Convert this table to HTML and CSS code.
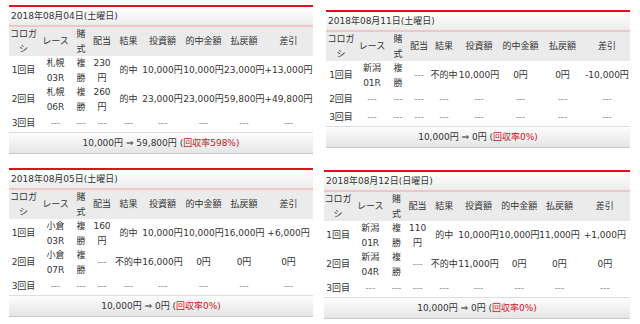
FILE: index.html
```html
<!DOCTYPE html>
<html lang="ja">
<head>
<meta charset="utf-8">
<title>コロガシ結果</title>
<link rel="stylesheet" href="styles.css">
</head>
<body>
<div class="board">

  <section class="card card-tl">
    <div class="date">2018年08月04日(土曜日)</div>
    <table class="bets bets-a">
      <colgroup><col class="c1"><col class="c2"><col class="c3"><col class="c4"><col class="c5"><col class="c6"><col class="c7"><col class="c8"><col class="c9"></colgroup>
      <thead>
        <tr><th>コロガ<br>シ</th><th>レース</th><th>賭<br>式</th><th>配当</th><th>結果</th><th>投資額</th><th>的中金額</th><th>払戻額</th><th>差引</th></tr>
      </thead>
      <tbody>
        <tr><td>1回目</td><td>札幌<br>03R</td><td>複<br>勝</td><td>230<br>円</td><td>的中</td><td>10,000円</td><td>10,000円</td><td>23,000円</td><td>+13,000円</td></tr>
        <tr><td>2回目</td><td>札幌<br>06R</td><td>複<br>勝</td><td>260<br>円</td><td>的中</td><td>23,000円</td><td>23,000円</td><td>59,800円</td><td>+49,800円</td></tr>
        <tr><td>3回目</td><td class="nil">---</td><td class="nil">---</td><td class="nil">---</td><td class="nil">---</td><td class="nil">---</td><td class="nil">---</td><td class="nil">---</td><td class="nil">---</td></tr>
      </tbody>
    </table>
    <div class="sum">10,000円 ⇒ 59,800円 (<span class="rate">回収率598%)</span></div>
  </section>

  <section class="card card-tr">
    <div class="date">2018年08月11日(土曜日)</div>
    <table class="bets bets-b">
      <colgroup><col class="c1"><col class="c2"><col class="c3"><col class="c4"><col class="c5"><col class="c6"><col class="c7"><col class="c8"><col class="c9"></colgroup>
      <thead>
        <tr><th>コロガ<br>シ</th><th>レース</th><th>賭<br>式</th><th>配当</th><th>結果</th><th>投資額</th><th>的中金額</th><th>払戻額</th><th>差引</th></tr>
      </thead>
      <tbody>
        <tr><td>1回目</td><td>新潟<br>01R</td><td>複<br>勝</td><td class="nil">---</td><td>不的中</td><td>10,000円</td><td>0円</td><td>0円</td><td>-10,000円</td></tr>
        <tr><td>2回目</td><td class="nil">---</td><td class="nil">---</td><td class="nil">---</td><td class="nil">---</td><td class="nil">---</td><td class="nil">---</td><td class="nil">---</td><td class="nil">---</td></tr>
        <tr><td>3回目</td><td class="nil">---</td><td class="nil">---</td><td class="nil">---</td><td class="nil">---</td><td class="nil">---</td><td class="nil">---</td><td class="nil">---</td><td class="nil">---</td></tr>
      </tbody>
    </table>
    <div class="sum">10,000円 ⇒ 0円 (<span class="rate">回収率0%)</span></div>
  </section>

  <section class="card card-bl">
    <div class="date">2018年08月05日(土曜日)</div>
    <table class="bets bets-a">
      <colgroup><col class="c1"><col class="c2"><col class="c3"><col class="c4"><col class="c5"><col class="c6"><col class="c7"><col class="c8"><col class="c9"></colgroup>
      <thead>
        <tr><th>コロガ<br>シ</th><th>レース</th><th>賭<br>式</th><th>配当</th><th>結果</th><th>投資額</th><th>的中金額</th><th>払戻額</th><th>差引</th></tr>
      </thead>
      <tbody>
        <tr><td>1回目</td><td>小倉<br>03R</td><td>複<br>勝</td><td>160<br>円</td><td>的中</td><td>10,000円</td><td>10,000円</td><td>16,000円</td><td>+6,000円</td></tr>
        <tr><td>2回目</td><td>小倉<br>07R</td><td>複<br>勝</td><td class="nil">---</td><td>不的中</td><td>16,000円</td><td>0円</td><td>0円</td><td>0円</td></tr>
        <tr><td>3回目</td><td class="nil">---</td><td class="nil">---</td><td class="nil">---</td><td class="nil">---</td><td class="nil">---</td><td class="nil">---</td><td class="nil">---</td><td class="nil">---</td></tr>
      </tbody>
    </table>
    <div class="sum">10,000円 ⇒ 0円 (<span class="rate">回収率0%)</span></div>
  </section>

  <section class="card card-br">
    <div class="date">2018年08月12日(日曜日)</div>
    <table class="bets bets-c">
      <colgroup><col class="c1"><col class="c2"><col class="c3"><col class="c4"><col class="c5"><col class="c6"><col class="c7"><col class="c8"><col class="c9"></colgroup>
      <thead>
        <tr><th>コロガ<br>シ</th><th>レース</th><th>賭<br>式</th><th>配当</th><th>結果</th><th>投資額</th><th>的中金額</th><th>払戻額</th><th>差引</th></tr>
      </thead>
      <tbody>
        <tr><td>1回目</td><td>新潟<br>01R</td><td>複<br>勝</td><td>110<br>円</td><td>的中</td><td>10,000円</td><td>10,000円</td><td>11,000円</td><td>+1,000円</td></tr>
        <tr><td>2回目</td><td>新潟<br>04R</td><td>複<br>勝</td><td class="nil">---</td><td>不的中</td><td>11,000円</td><td>0円</td><td>0円</td><td>0円</td></tr>
        <tr><td>3回目</td><td class="nil">---</td><td class="nil">---</td><td class="nil">---</td><td class="nil">---</td><td class="nil">---</td><td class="nil">---</td><td class="nil">---</td><td class="nil">---</td></tr>
      </tbody>
    </table>
    <div class="sum">10,000円 ⇒ 0円 (<span class="rate">回収率0%)</span></div>
  </section>

</div>
</body>
</html>
```

FILE: styles.css
```css
html, body {
  margin: 0;
  padding: 0;
  background: #ffffff;
}

body {
  font-family: "DejaVu Sans", "Noto Sans CJK JP", sans-serif;
  font-size: 9px;
  color: #333333;
}

.board {
  display: grid;
  grid-template-columns: 304px 304px;
  column-gap: 13px;
  row-gap: 14px;
  padding: 5px 0 0 9px;
  align-items: start;
}

.card-tr {
  margin-top: 5px;
}

.card-br {
  margin-top: 2px;
  margin-left: -2px;
}

.date {
  height: 18px;
  line-height: 18px;
  padding-left: 2px;
  border-top: 2px solid #e3101c;
  border-bottom: 2px solid #f3c6c6;
  background: linear-gradient(#ffffff, #ececec);
  white-space: nowrap;
}

.bets {
  width: 100%;
  border-collapse: collapse;
  table-layout: fixed;
}

.bets th,
.bets td {
  padding: 0;
  height: 18px;
  line-height: 14.5px;
  text-align: center;
  vertical-align: middle;
  white-space: nowrap;
  font-weight: normal;
}

.bets thead tr {
  background: #ebebeb;
}

.bets .nil {
  color: #8a8a8a;
}

/* column widths: 08/04 and 08/05 tables */
.bets-a .c1 { width: 29px; }
.bets-a .c2 { width: 35px; }
.bets-a .c3 { width: 16px; }
.bets-a .c4 { width: 26px; }
.bets-a .c5 { width: 27px; }
.bets-a .c6 { width: 41px; }
.bets-a .c7 { width: 41px; }
.bets-a .c8 { width: 40px; }
.bets-a .c9 { width: 49px; }

/* 08/11 table */
.bets-b .c1 { width: 30px; }
.bets-b .c2 { width: 32px; }
.bets-b .c3 { width: 20px; }
.bets-b .c4 { width: 22px; }
.bets-b .c5 { width: 28px; }
.bets-b .c6 { width: 42px; }
.bets-b .c7 { width: 41px; }
.bets-b .c8 { width: 43px; }
.bets-b .c9 { width: 46px; }

/* 08/12 table */
.bets-c .c1 { width: 28px; }
.bets-c .c2 { width: 36px; }
.bets-c .c3 { width: 16px; }
.bets-c .c4 { width: 26px; }
.bets-c .c5 { width: 27px; }
.bets-c .c6 { width: 41px; }
.bets-c .c7 { width: 40px; }
.bets-c .c8 { width: 40px; }
.bets-c .c9 { width: 50px; }

.sum {
  height: 20px;
  line-height: 20px;
  text-align: center;
  border-top: 1px solid #dddddd;
  border-bottom: 1px solid #c9c9c9;
  background: linear-gradient(#fdfdfd, #e5e5e5);
  white-space: nowrap;
}

.rate {
  color: #d0121b;
}
```
